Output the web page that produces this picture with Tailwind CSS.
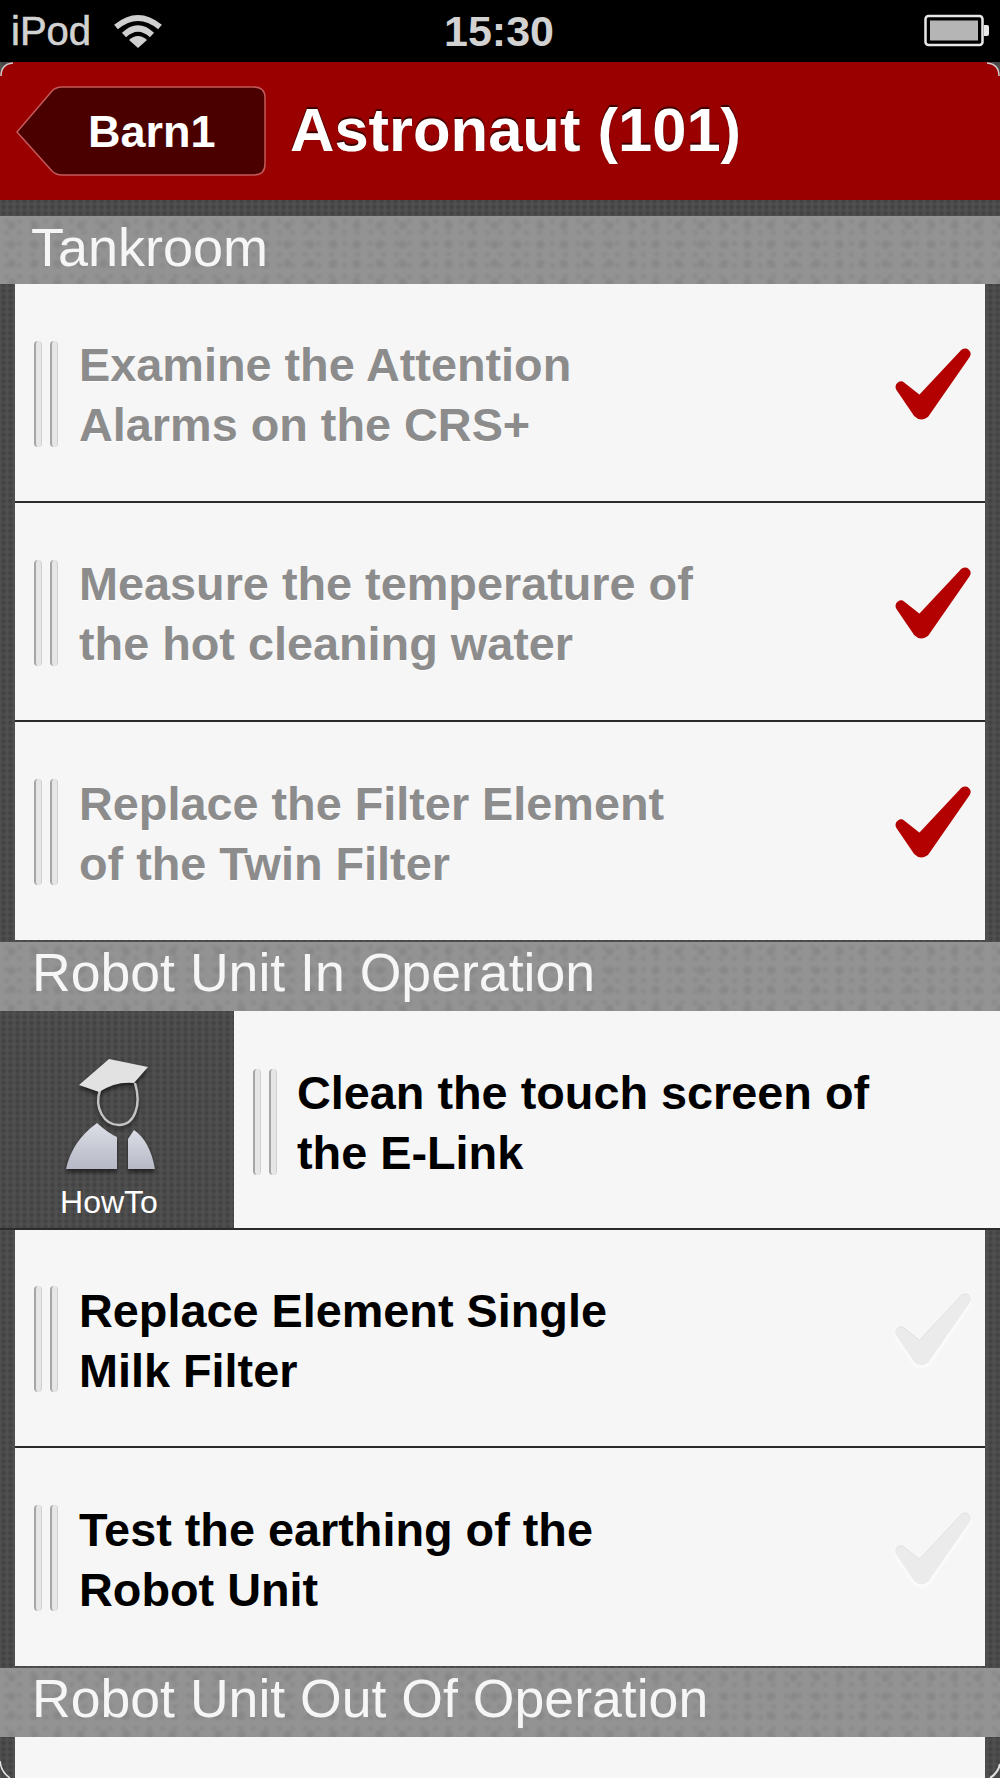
<!DOCTYPE html>
<html lang="en">
  <head>
    <meta charset="UTF-8" />
    <meta name="viewport" content="width=device-width, initial-scale=1.0" />
    <title>Astronaut (101)</title>
    <script src="https://cdn.jsdelivr.net/npm/@tailwindcss/browser@4"></script>
  </head>
  <body class="bg-black font-['Liberation_Sans',Arial,sans-serif]">
    <main class="relative w-[1000px] h-[1778px] overflow-hidden bg-[#4b4b4b] bg-[radial-gradient(circle,#434343_25%,#505050_75%)] bg-[length:7px_6px]">
      <!-- status bar -->
      <header class="h-[62px] bg-black flex items-center justify-between pl-[11px] pr-[10px] text-[#d2d2d2]">
        <div class="flex items-center gap-[22px] w-[300px]">
          <span class="text-[40px] leading-none [-webkit-text-stroke:0.6px_#d2d2d2]">iPod</span>
          <svg width="50" height="38" viewBox="0 0 50 38" fill="none" stroke="#cfcfcf" stroke-width="6">
            <path d="M3 15 Q25 -3 47 15" />
            <path d="M11 23 Q25 10 39 23" />
            <path d="M25 36 L16 28 Q25 20 34 28 Z" fill="#cfcfcf" stroke="none" />
          </svg>
        </div>
        <span class="text-[43px] leading-none font-bold -ml-[3px]">15:30</span>
        <div class="w-[300px] flex justify-end">
          <svg width="66" height="34" viewBox="0 0 66 34" fill="none">
            <rect x="1.5" y="2" width="57" height="29" rx="3" stroke="#e8e8e8" stroke-width="2.5" />
            <rect x="6" y="6.5" width="48" height="20" fill="#b5b5b5" />
            <path d="M60 11 h3 a2 2 0 0 1 2 2 v7 a2 2 0 0 1 -2 2 h-3 z" fill="#e8e8e8" />
          </svg>
        </div>
      </header>

      <!-- nav bar -->
      <nav class="relative h-[138px] bg-[#9a0000] rounded-t-[14px] flex items-center pl-[16px] gap-[24px]">
        <a class="relative w-[250px] h-[90px] flex items-center pl-[72px] text-white text-[45px] font-bold">
          <svg class="absolute left-0 top-0" width="250" height="90" viewBox="0 0 250 90">
            <path d="M1 46 L36 5 Q40 1 46 1 H238 Q249 1 249 12 V78 Q249 89 238 89 H46 Q40 89 36 85 Z" fill="#4b0000" stroke="#c25a5a" stroke-width="1.5" />
          </svg>
          <span class="relative leading-none">Barn1</span>
        </a>
        <h1 class="text-white text-[61.5px] font-bold leading-none -mt-[2px] [text-shadow:0_-2px_1px_#3a0000]">Astronaut (101)</h1>
        <svg class="absolute left-0 top-0" width="16" height="16" viewBox="0 0 16 16" fill="none" stroke="#cfcfcf" stroke-width="1.5"><path d="M1 14 Q1 2 13 1" /></svg>
        <svg class="absolute right-0 top-0" width="16" height="16" viewBox="0 0 16 16" fill="none" stroke="#cfcfcf" stroke-width="1.5"><path d="M15 14 Q15 2 3 1" /></svg>
      </nav>
      <div class="h-[16px]"></div>

      <!-- Tankroom -->
      <h2 class="h-[68px] flex items-center pl-[31px] pb-[6px] text-[54px] leading-none text-[#f6f6f6] bg-[#919191] bg-[radial-gradient(circle,#888888_12%,transparent_40%),radial-gradient(circle,#8c8c8c_10%,#939393_50%)] bg-[length:23px_19px,13px_11px]">Tankroom</h2>
      <ul class="px-[15px]">
        <li class="h-[219px] pt-[2px] border-b-[2px] border-[#2b2b2b] bg-[#f6f6f6] flex items-center pl-[19px] pr-[6px]">
          <div class="flex gap-[8px] shrink-0">
            <span class="w-[8px] h-[106px] rounded-full bg-[#e6e6e6] border-l-2 border-[#a5a5a5] border-r border-r-[#d0d0d0]"></span>
            <span class="w-[8px] h-[106px] rounded-full bg-[#e6e6e6] border-l-2 border-[#a5a5a5] border-r border-r-[#d0d0d0]"></span>
          </div>
          <p class="ml-[21px] mt-[3px] flex-1 text-[46.8px] leading-[60px] font-bold text-[#8c8c8c] [text-shadow:0_1px_1px_#fff]">Examine the Attention<br />Alarms on the CRS+</p>
          <svg class="-mt-[16px]" width="90" height="80" viewBox="0 0 90 80" fill="#b30000" stroke="#b30000" stroke-width="11" stroke-linejoin="round"><path d="M12 41 L31 56 L76 8 L35 67 Q32 69 29 66 Z" /></svg>
        </li>
        <li class="h-[219px] pt-[2px] border-b-[2px] border-[#2b2b2b] bg-[#f6f6f6] flex items-center pl-[19px] pr-[6px]">
          <div class="flex gap-[8px] shrink-0">
            <span class="w-[8px] h-[106px] rounded-full bg-[#e6e6e6] border-l-2 border-[#a5a5a5] border-r border-r-[#d0d0d0]"></span>
            <span class="w-[8px] h-[106px] rounded-full bg-[#e6e6e6] border-l-2 border-[#a5a5a5] border-r border-r-[#d0d0d0]"></span>
          </div>
          <p class="ml-[21px] mt-[3px] flex-1 text-[46.8px] leading-[60px] font-bold text-[#8c8c8c] [text-shadow:0_1px_1px_#fff]">Measure the temperature of<br />the hot cleaning water</p>
          <svg class="-mt-[16px]" width="90" height="80" viewBox="0 0 90 80" fill="#b30000" stroke="#b30000" stroke-width="11" stroke-linejoin="round"><path d="M12 41 L31 56 L76 8 L35 67 Q32 69 29 66 Z" /></svg>
        </li>
        <li class="h-[218px] pt-[2px] bg-[#f6f6f6] flex items-center pl-[19px] pr-[6px]">
          <div class="flex gap-[8px] shrink-0">
            <span class="w-[8px] h-[106px] rounded-full bg-[#e6e6e6] border-l-2 border-[#a5a5a5] border-r border-r-[#d0d0d0]"></span>
            <span class="w-[8px] h-[106px] rounded-full bg-[#e6e6e6] border-l-2 border-[#a5a5a5] border-r border-r-[#d0d0d0]"></span>
          </div>
          <p class="ml-[21px] mt-[3px] flex-1 text-[46.8px] leading-[60px] font-bold text-[#8c8c8c] [text-shadow:0_1px_1px_#fff]">Replace the Filter Element<br />of the Twin Filter</p>
          <svg class="-mt-[16px]" width="90" height="80" viewBox="0 0 90 80" fill="#b30000" stroke="#b30000" stroke-width="11" stroke-linejoin="round"><path d="M12 41 L31 56 L76 8 L35 67 Q32 69 29 66 Z" /></svg>
        </li>
      </ul>

      <!-- Robot Unit In Operation -->
      <h2 class="mt-[2px] h-[69px] flex items-center pl-[32px] pb-[7px] text-[53.6px] leading-none text-[#f6f6f6] bg-[#919191] bg-[radial-gradient(circle,#888888_12%,transparent_40%),radial-gradient(circle,#8c8c8c_10%,#939393_50%)] bg-[length:23px_19px,13px_11px]">Robot Unit In Operation</h2>
      <div class="h-[219px] flex border-b-[2px] border-[#2b2b2b]">
        <div class="w-[234px] shrink-0 flex flex-col items-center justify-end pb-[10px] text-white">
          <svg class="-ml-[11px] mb-[16px] drop-shadow-[0_3px_2px_rgba(0,0,0,0.6)]" width="100" height="112" viewBox="62 1060 100 112" fill="none">
            <defs>
              <linearGradient id="robe" x1="0" y1="0" x2="0" y2="1"><stop offset="0" stop-color="#dcdee6" /><stop offset="1" stop-color="#b6b9c6" /></linearGradient>
            </defs>
            <path d="M100 1092 C94 1110 104 1127 119 1127 C134 1127 142 1108 135 1085" stroke="#c4c4c4" stroke-width="2.5" />
            <path d="M109 1061 L148 1069 L134 1085 Q116 1083 99 1094 L79 1087 Z" fill="#e2e2e2" />
            <path d="M97 1125 Q108 1135 117 1139 V1171 H66 Q72 1143 97 1125 Z" fill="url(#robe)" />
            <path d="M134 1132 Q150 1143 155 1171 H128 V1141 Z" fill="url(#robe)" />
          </svg>
          <span class="text-[32px] leading-none -ml-[16px]">HowTo</span>
        </div>
        <div class="flex-1 bg-[#f6f6f6] flex items-center pl-[19px] pt-[4px]">
          <div class="flex gap-[8px] shrink-0">
            <span class="w-[8px] h-[106px] rounded-full bg-[#e6e6e6] border-l-2 border-[#a5a5a5] border-r border-r-[#d0d0d0]"></span>
            <span class="w-[8px] h-[106px] rounded-full bg-[#e6e6e6] border-l-2 border-[#a5a5a5] border-r border-r-[#d0d0d0]"></span>
          </div>
          <p class="ml-[20px] mt-[3px] text-[46.8px] leading-[60px] font-bold text-black">Clean the touch screen of<br />the E-Link</p>
        </div>
      </div>
      <ul class="px-[15px]">
        <li class="h-[218px] pt-[2px] border-b-[2px] border-[#2b2b2b] bg-[#f6f6f6] flex items-center pl-[19px] pr-[6px]">
          <div class="flex gap-[8px] shrink-0">
            <span class="w-[8px] h-[106px] rounded-full bg-[#e6e6e6] border-l-2 border-[#a5a5a5] border-r border-r-[#d0d0d0]"></span>
            <span class="w-[8px] h-[106px] rounded-full bg-[#e6e6e6] border-l-2 border-[#a5a5a5] border-r border-r-[#d0d0d0]"></span>
          </div>
          <p class="ml-[21px] mt-[3px] flex-1 text-[46.8px] leading-[60px] font-bold text-black">Replace Element Single<br />Milk Filter</p>
          <svg class="-mt-[14px] drop-shadow-[0_2px_2px_#ffffff]" width="90" height="80" viewBox="0 0 90 80" stroke-width="11" stroke-linejoin="round"><path d="M12 40 L31 55 L76 7 L35 66 Q32 68 29 65 Z" fill="#dedede" stroke="#dedede" /><path d="M12 41 L31 56 L76 8 L35 67 Q32 69 29 66 Z" fill="#ebebeb" stroke="#ebebeb" /></svg>
        </li>
        <li class="h-[218px] pt-[2px] bg-[#f6f6f6] flex items-center pl-[19px] pr-[6px]">
          <div class="flex gap-[8px] shrink-0">
            <span class="w-[8px] h-[106px] rounded-full bg-[#e6e6e6] border-l-2 border-[#a5a5a5] border-r border-r-[#d0d0d0]"></span>
            <span class="w-[8px] h-[106px] rounded-full bg-[#e6e6e6] border-l-2 border-[#a5a5a5] border-r border-r-[#d0d0d0]"></span>
          </div>
          <p class="ml-[21px] mt-[3px] flex-1 text-[46.8px] leading-[60px] font-bold text-black">Test the earthing of the<br />Robot Unit</p>
          <svg class="-mt-[14px] drop-shadow-[0_2px_2px_#ffffff]" width="90" height="80" viewBox="0 0 90 80" stroke-width="11" stroke-linejoin="round"><path d="M12 40 L31 55 L76 7 L35 66 Q32 68 29 65 Z" fill="#dedede" stroke="#dedede" /><path d="M12 41 L31 56 L76 8 L35 67 Q32 69 29 66 Z" fill="#ebebeb" stroke="#ebebeb" /></svg>
        </li>
      </ul>

      <!-- Robot Unit Out Of Operation -->
      <h2 class="mt-[2px] h-[69px] flex items-center pl-[32px] pb-[7px] text-[53.6px] leading-none text-[#f6f6f6] bg-[#919191] bg-[radial-gradient(circle,#888888_12%,transparent_40%),radial-gradient(circle,#8c8c8c_10%,#939393_50%)] bg-[length:23px_19px,13px_11px]">Robot Unit Out Of Operation</h2>
      <div class="mx-[15px] h-[60px] bg-[#f6f6f6]"></div>
      <svg class="absolute left-0 bottom-0" width="14" height="18" viewBox="0 0 14 18" fill="none" stroke="#e5e5e5" stroke-width="1.5"><path d="M0 1 Q1 12 10 18" /></svg>
      <svg class="absolute right-0 bottom-0" width="14" height="18" viewBox="0 0 14 18" fill="none" stroke="#e5e5e5" stroke-width="2"><path d="M14 4 Q12 13 4 18" /></svg>
    </main>
  </body>
</html>
